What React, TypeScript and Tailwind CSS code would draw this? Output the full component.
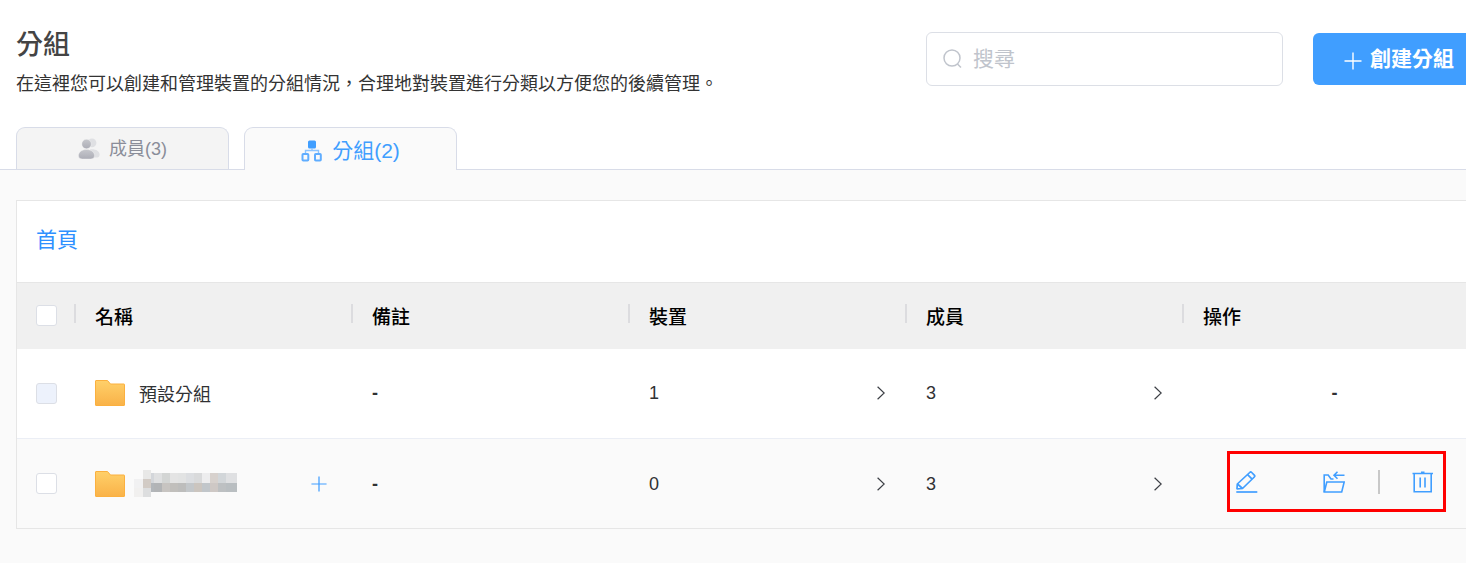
import React, { useState } from 'react';

interface Group {
  id: number;
  name: string;
  remark: string;
  devices: number;
  members: number;
  locked: boolean;
}

const GROUPS: Group[] = [
  { id: 1, name: '預設分組', remark: '-', devices: 1, members: 3, locked: true },
  { id: 2, name: '', remark: '-', devices: 0, members: 3, locked: false },
];

const COLUMNS = ['名稱', '備註', '裝置', '成員', '操作'];

const SearchIcon = () => (
  <svg className="h-5 w-5 shrink-0" viewBox="0 0 20 20" fill="none" stroke="#c0c4cc" strokeWidth="1.5">
    <circle cx="9" cy="9" r="8" />
    <path d="M14.500 15l3.500 3.500" />
  </svg>
);

const PlusIcon = ({ className }: { className: string }) => (
  <svg className={className} viewBox="0 0 18 18" fill="none" stroke="currentColor" strokeWidth="1.4">
    <path d="M9 0.5v17M0.5 9h17" />
  </svg>
);

const MembersIcon = () => (
  <svg className="h-[22px] w-[22px]" viewBox="0 0 22 22">
    <defs>
      <linearGradient id="members-fill" x1="0" y1="0" x2="0" y2="1">
        <stop offset="0" stopColor="#c6c7cc" />
        <stop offset="1" stopColor="#acadb6" />
      </linearGradient>
    </defs>
    <circle cx="14" cy="4.8" r="4.4" fill="#dfe0e3" />
    <path d="M12 11.5c5-.8 9.6 1.5 9.6 5.2 0 2-1.4 2.8-3.6 2.8h-6z" fill="#dfe0e3" />
    <circle cx="8.5" cy="6" r="4.7" fill="url(#members-fill)" stroke="#f4f4f4" strokeWidth=".4" />
    <path d="M8.5 11.5c4.600 0 8 2.600 8 6.200 0 2.200-1.700 3.300-4 3.300H4.500c-2.300 0-4-1.100-4-3.300 0-3.600 3.400-6.200 8-6.200z" fill="url(#members-fill)" stroke="#f4f4f4" strokeWidth=".4" />
  </svg>
);

const TreeIcon = () => (
  <svg className="h-[22px] w-[22px]" viewBox="0 0 22 22" fill="none">
    <rect x="7" y=".5" width="8" height="8" rx="1.5" fill="#409eff" />
    <path d="M11 8v2.5M4.500 14v-3.500h13V14" stroke="#8cc4ff" strokeWidth="1.4" />
    <rect x="1.500" y="14" width="5.800" height="6.500" rx=".8" stroke="#5fadff" strokeWidth="2" />
    <rect x="14" y="14" width="5.800" height="6.500" rx=".8" stroke="#5fadff" strokeWidth="2" />
  </svg>
);

const FolderIcon = () => (
  <svg className="h-[26px] w-[30px] shrink-0" viewBox="0 0 30 26">
    <defs>
      <linearGradient id="folder-fill" x1="0" y1="0" x2="0" y2="1">
        <stop offset="0" stopColor="#ffd06a" />
        <stop offset="1" stopColor="#f9b248" />
      </linearGradient>
    </defs>
    <path d="M1 .5h11.5L15.500 4H29a.5.5 0 0 1 .5.5V25a.5.5 0 0 1-.5.5H1a.5.5 0 0 1-.5-.5V1A.5.5 0 0 1 1 .5z" fill="url(#folder-fill)" stroke="#fbb03f" />
  </svg>
);

const ChevronIcon = () => (
  <svg className="h-[14px] w-2" viewBox="0 0 8 14" fill="none" stroke="#3c3f45" strokeWidth="1.2">
    <path d="M.6.8L7.2 7 .6 13.2" />
  </svg>
);

const EditIcon = () => (
  <svg className="h-[22px] w-[22px]" viewBox="0 0 22 22" fill="none" stroke="#409eff" strokeWidth="1.7" strokeLinejoin="round">
    <path d="M1 17.800l.3-4.800L13.700 1.500c.6-.6 1.400-.6 2 0l2.600 2.600c.6.6.6 1.300 0 1.900L6.500 17.500z" />
    <path d="M11.600 3.700l4.500 4.500M1.500 13l5 4.500" />
    <path d="M.3 21h21" />
  </svg>
);

const MoveIcon = () => (
  <svg className="h-[22px] w-[22px]" viewBox="0 0 22 22" fill="none" stroke="#409eff" strokeWidth="1.6">
    <path d="M1.200 21V4h4L8 8h2.500" />
    <path d="M1.300 21L3.800 11h17.400L18.700 21z" />
    <path d="M21.500 4.200H10.800M14.500.7L11 4.200l3.500 3.500" />
  </svg>
);

const TrashIcon = () => (
  <svg className="h-[22px] w-[22px]" viewBox="0 0 22 22" fill="none" stroke="#409eff" strokeWidth="1.6">
    <path d="M.5 2.500h20.500M2.200 2.500v18.300h17V2.500M8.200 6.500v10M13 6.500v10M9 1.200h3.500" />
  </svg>
);

// Pixelated stand-in for a hidden group name.
const MaskedName = () => (
  <svg className="h-[27px] w-[103px]" viewBox="0 0 103 27" shapeRendering="crispEdges" role="img" aria-label="已隱藏">
    <rect x="0" y="9" width="9" height="9" fill="#f1f1f2" />
    <rect x="0" y="18" width="9" height="9" fill="#f1f0ef" />
    <rect x="9" y="0" width="8" height="9" fill="#e8e8e7" />
    <rect x="9" y="9" width="8" height="9" fill="#d2cbc5" />
    <rect x="9" y="18" width="8" height="9" fill="#dddedf" />
    {['#d3d6da', '#dfe0e1', '#d3d5d4', '#e4e4e4', '#e2e3e3', '#dcdee1', '#d9dadb', '#ededee', '#d7d1cd', '#d2d6d9', '#dfe0e2'].map((fill, i) => (
      <rect key={i} x={i === 0 ? 17 : 12 + i * 8} y="3" width={i === 0 ? 3 : 8} height="10" fill={fill} />
    ))}
    {['#b2b6ba', '#b2b4b6', '#c7c4c1', '#c1bfbc', '#bdbdbc', '#c3c7ca', '#cbc5bf', '#c1c6ca', '#cec8c5', '#bdc0c2', '#b9bec1'].map((fill, i) => (
      <rect key={i} x={i === 0 ? 17 : 12 + i * 8} y="13" width={i === 0 ? 3 : 8} height="9" fill={fill} />
    ))}
    <rect x="100" y="3" width="3" height="10" fill="#dfe0e2" />
    <rect x="100" y="13" width="3" height="9" fill="#b9bec1" />
  </svg>
);

interface CheckBoxProps {
  label: string;
  checked: boolean;
  disabled?: boolean;
  onChange: () => void;
}

const CheckBox = ({ label, checked, disabled, onChange }: CheckBoxProps) => (
  <input
    type="checkbox"
    aria-label={label}
    checked={checked}
    disabled={disabled}
    onChange={onChange}
    className="block h-[21px] w-[21px] appearance-none rounded-[3px] border border-[#dcdfe6] bg-white checked:bg-[#409eff] disabled:bg-[#edf2fc]"
  />
);

const CountCell = ({ value, label }: { value: number; label: string }) => (
  <td className="pr-5 pl-[21px]">
    <button type="button" aria-label={`${label} ${value}`} className="flex w-full items-center justify-between">
      <span>{value}</span>
      <ChevronIcon />
    </button>
  </td>
);

const RowActions = () => (
  <div className="relative mb-1 grid h-[61px] grid-cols-3 items-center">
    <div className="pointer-events-none absolute inset-y-0 right-5 left-6 border-3 border-[#ff0000]" />
    <button type="button" aria-label="編輯" className="flex justify-center">
      <EditIcon />
    </button>
    <button type="button" aria-label="移動" className="flex justify-center">
      <MoveIcon />
    </button>
    <button type="button" aria-label="刪除" className="flex h-6 items-center justify-center border-l-2 border-[#c8c8c8]">
      <TrashIcon />
    </button>
  </div>
);

export default function App() {
  const [tab, setTab] = useState<'members' | 'groups'>('groups');
  const [query, setQuery] = useState('');
  const [selected, setSelected] = useState<number[]>([]);

  const toggle = (id: number) =>
    setSelected((prev) => (prev.includes(id) ? prev.filter((item) => item !== id) : [...prev, id]));

  const tabClass = (active: boolean) =>
    active
      ? '-mb-px flex h-[43px] w-[213px] items-center justify-center gap-[9px] rounded-t-[9px] border border-b-0 border-[#d8dce8] bg-[#fafafa] pt-[3px] text-[21px] text-[#409eff]'
      : 'flex h-[42px] w-[213px] items-center justify-center gap-[9px] rounded-t-[9px] border border-b-0 border-[#d8dce8] bg-[#f4f4f4] pt-px text-lg text-[#8a8d99]';

  return (
    <div className="min-h-screen overflow-x-hidden bg-[#fafafa] pb-8 font-['Liberation_Sans','Noto_Sans_CJK_TC',sans-serif] text-[#303133]">
      <header className="bg-white">
        <div className="flex items-start pt-8 pl-4">
          <div className="-mt-2 flex-1">
            <h1 className="text-[27px] leading-[42px] font-medium text-[#444]">分組</h1>
            <p className="text-lg leading-9 text-[#333]">在這裡您可以創建和管理裝置的分組情況，合理地對裝置進行分類以方便您的後續管理。</p>
          </div>
          <label className="flex h-[54px] w-[357px] items-center gap-[10px] rounded-md border border-[#dcdfe6] bg-white px-4">
            <SearchIcon />
            <input
              type="text"
              aria-label="搜尋"
              placeholder="搜尋"
              value={query}
              onChange={(e) => setQuery(e.target.value)}
              className="w-full bg-transparent text-[21px] outline-none placeholder:text-[#c0c4cc]"
            />
          </label>
          <button type="button" className="mt-px ml-[30px] flex h-[52px] items-center gap-2 rounded-l-md bg-[#409eff] pr-3 pl-[31px] text-[21px] font-bold text-white">
            <PlusIcon className="mt-1 h-[18px] w-[18px]" />
            創建分組
          </button>
        </div>
        <nav className="mt-[25px] flex items-end gap-[15px] border-b border-[#d8dce8] px-4">
          <button type="button" onClick={() => setTab('members')} className={tabClass(tab === 'members')}>
            <MembersIcon />
            成員(3)
          </button>
          <button type="button" onClick={() => setTab('groups')} className={tabClass(tab === 'groups')}>
            <TreeIcon />
            分組(2)
          </button>
        </nav>
      </header>

      <main className="mt-[30px] ml-4 border-t border-l border-[#e6e6e6] bg-white">
        <div className="flex h-[81px] items-center pb-1 pl-[19px]">
          <a href="#home" className="text-[21px] text-[#2e90ff]">首頁</a>
        </div>
        <table className="w-full table-fixed text-left text-lg">
          <colgroup>
            <col className="w-[57px]" />
            <col className="w-[277px]" />
            <col className="w-[277px]" />
            <col className="w-[277px]" />
            <col className="w-[277px]" />
            <col />
          </colgroup>
          <thead>
            <tr className="h-[66px] border-t border-[#e6e6e6] bg-[#f0f0f0]">
              <th className="pl-[19px]">
                <CheckBox
                  label="全選"
                  checked={selected.includes(2)}
                  onChange={() => toggle(2)}
                />
              </th>
              {COLUMNS.map((title) => (
                <th key={title} className="text-[19px] font-medium text-black">
                  <div className="flex items-center">
                    <span className="mr-[19px] mb-1 h-[19px] w-[2px] bg-[#dcdcdf]" />
                    <span className="pt-1">{title}</span>
                  </div>
                </th>
              ))}
            </tr>
          </thead>
          <tbody>
            {GROUPS.map((group) => (
              <tr key={group.id} className={`h-[90px] border-b ${group.locked ? 'border-[#ebeef5] bg-white' : 'border-[#e6e6e6] bg-[#fafafa]'}`}>
                <td className="pl-[19px]">
                  <CheckBox
                    label={group.name || '選取分組'}
                    checked={selected.includes(group.id)}
                    disabled={group.locked}
                    onChange={() => toggle(group.id)}
                  />
                </td>
                <td className="pr-6 pl-[21px]">
                  <div className="flex items-center">
                    <FolderIcon />
                    {group.name ? (
                      <span className="ml-[14px] pt-[3px]">{group.name}</span>
                    ) : (
                      <>
                        <span className="ml-[9px]"><MaskedName /></span>
                        <button type="button" aria-label="新增子分組" className="ml-auto text-[#409eff]">
                          <PlusIcon className="h-4 w-4" />
                        </button>
                      </>
                    )}
                  </div>
                </td>
                <td className="pl-[21px] font-bold">{group.remark}</td>
                <CountCell value={group.devices} label="裝置" />
                <CountCell value={group.members} label="成員" />
                <td className="pl-[21px]">
                  {group.locked ? <div className="text-center font-bold">-</div> : <RowActions />}
                </td>
              </tr>
            ))}
          </tbody>
        </table>
      </main>
    </div>
  );
}
